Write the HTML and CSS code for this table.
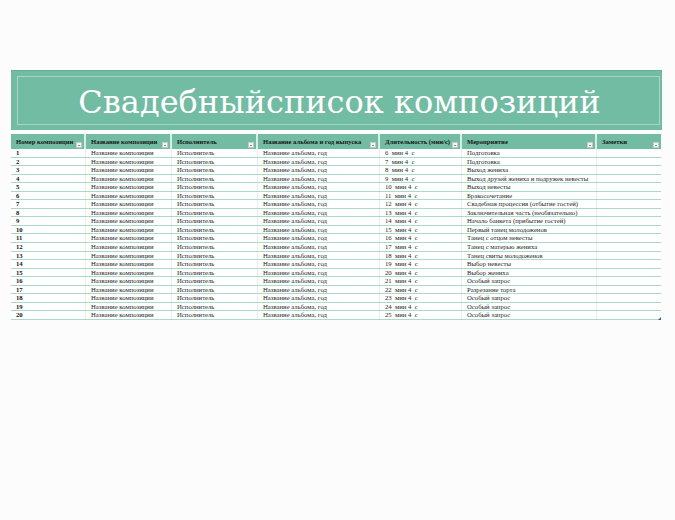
FILE: index.html
```html
<!DOCTYPE html>
<html lang="ru">
<head>
<meta charset="utf-8">
<title>Свадебный список композиций</title>
<link rel="stylesheet" href="styles.css">
</head>
<body>
<div class="page">
  <header class="banner">
    <div class="banner-inner">
      <h1 class="title">Свадебныйсписок композиций</h1>
    </div>
  </header>
  <div class="sheet">
    <div class="row head">
      <div class="cell">Номер композиции<span class="filter"></span></div>
      <div class="cell">Название композиции<span class="filter"></span></div>
      <div class="cell">Исполнитель<span class="filter"></span></div>
      <div class="cell">Название альбома и год выпуска<span class="filter"></span></div>
      <div class="cell">Длительность (мин/с)<span class="filter"></span></div>
      <div class="cell">Мероприятие<span class="filter"></span></div>
      <div class="cell">Заметки<span class="filter"></span></div>
    </div>
    <div id="rows"></div>
  </div>
</div>
<script src="script.js"></script>
</body>
</html>
```
FILE: script.js
```js
const events = [
  "Подготовка","Подготовка","Выход жениха","Выход друзей жениха и подружек невесты",
  "Выход невесты","Бракосочетание","Свадебная процессия (отбытие гостей)",
  "Заключительная часть (необязательно)","Начало банкета (прибытие гостей)",
  "Первый танец молодоженов","Танец с отцом невесты","Танец с матерью жениха",
  "Танец свиты молодоженов","Выбор невесты","Выбор жениха","Особый запрос",
  "Разрезание торта","Особый запрос","Особый запрос","Особый запрос"
];
const host = document.getElementById("rows");
events.forEach((ev, i) => {
  const row = document.createElement("div");
  row.className = "row body";
  const vals = [String(i + 1), "Название композиции", "Исполнитель", "Название альбома, год", (i + 6) + "\u00a0 мин 4\u00a0 с", ev, ""];
  vals.forEach((v, j) => {
    const c = document.createElement("div");
    c.className = "cell" + (j === 0 ? " num" : "");
    c.textContent = v;
    row.appendChild(c);
  });
  host.appendChild(row);
});
const last = host.lastElementChild.lastElementChild;
const grip = document.createElement("span");
grip.className = "grip";
last.appendChild(grip);
```
FILE: styles.css
```css
html, body {
  margin: 0;
  padding: 0;
  background: #fcfcfc;
}
.page {
  padding: 70px 0 0 11px;
  width: 651px;
}
.banner {
  height: 60px;
  background: #72bca4;
  padding: 5px 2px 5px 6px;
  box-sizing: border-box;
  border-top: 1px solid #6aae98;
}
.banner-inner {
  height: 100%;
  border: 1px solid #a6d6c4;
  box-sizing: border-box;
  display: flex;
  align-items: center;
  justify-content: center;
}
.title {
  margin: 0;
  color: #ffffff;
  font-family: "DejaVu Serif", "Liberation Serif", serif;
  font-weight: normal;
  font-size: 32px;
  line-height: 1;
  white-space: nowrap;
  padding: 2px 0 0 2px;
}
.sheet {
  margin-top: 4px;
  width: 650px;
  font-family: "Liberation Serif", "DejaVu Serif", serif;
}
.row {
  display: grid;
  grid-template-columns: 75px 86px 86px 122px 82px 135px 64px;
}
.head {
  height: 15px;
  background: #72bca4;
}
.head .cell {
  position: relative;
  font-weight: bold;
  font-size: 6.6px;
  color: #161616;
  padding: 4px 0 0 5px;
  box-sizing: border-box;
  border-right: 2px solid #d9ece5;
  white-space: nowrap;
}
.head .cell:last-child {
  border-right: none;
}
.filter {
  position: absolute;
  right: 2px;
  bottom: 1px;
  width: 6px;
  height: 6px;
  background: #f2f2f2;
  border: 1px solid #c9c9c9;
  box-sizing: border-box;
}
.filter::after {
  content: "";
  position: absolute;
  left: 1px;
  top: 2px;
  border-left: 1.5px solid transparent;
  border-right: 1.5px solid transparent;
  border-top: 1.5px solid #333;
}
.body {
  height: 8.55px;
  background: #ffffff;
  border-bottom: 1px solid #acd9c8;
  box-sizing: border-box;
}
.body .cell {
  position: relative;
  font-size: 6.7px;
  line-height: 7.5px;
  color: #262626;
  padding-left: 5px;
  border-right: 1px solid #ececec;
  white-space: nowrap;
  overflow: hidden;
}
.body .cell:last-child {
  border-right: none;
  overflow: visible;
}
.body .num {
  font-weight: bold;
  color: #161616;
}
.grip {
  position: absolute;
  right: 0;
  bottom: -1px;
  width: 0;
  height: 0;
  border-left: 3px solid transparent;
  border-bottom: 3px solid #3a5f8a;
}
```
